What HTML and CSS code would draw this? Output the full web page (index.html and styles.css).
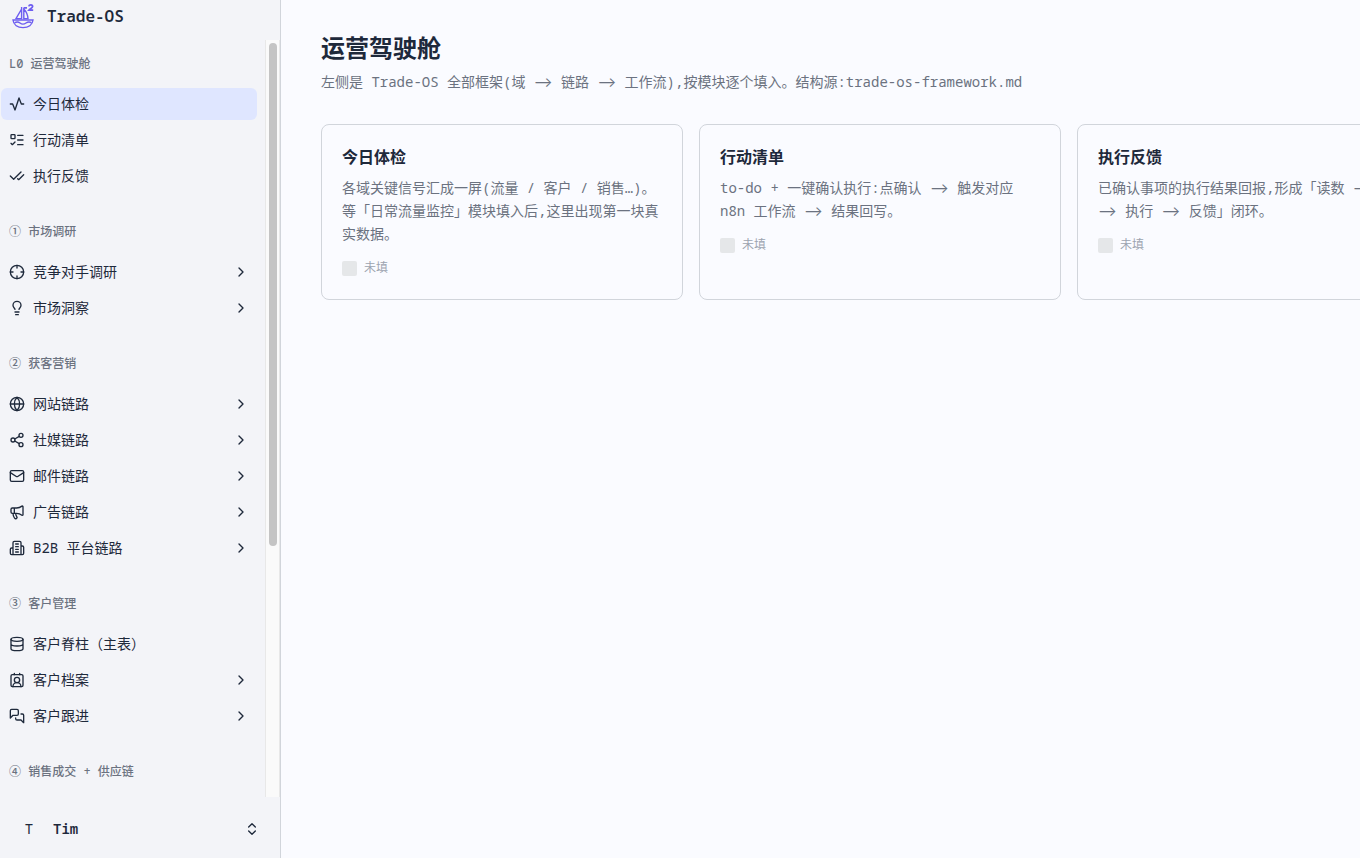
FILE: index.html
```
<!DOCTYPE html>
<html lang="zh-CN">

<head>
    <meta charset="UTF-8">
    <title>Trade-OS</title>
    <link rel="stylesheet" href="styles.css">
</head>

<body>

    <aside class="sidebar">
        <a href="#" class="brand">
            <svg class="logo" viewBox="0 0 24 24">
                <path d="M10.600 3v12.600M10.600 5 5 14.600h5.600M12.800 3.500v12M12.800 5c2.600 2.800 4 6 4.200 9.600h-4.200" />
                <path d="M2 16h20c-.5 4.800-4.600 7.600-10 7.600S2.500 20.800 2 16z" />
                <path d="M3.500 19c2-1.400 3.800-1.300 5.500 0s4 1.400 6 0 3.800-1.300 5.500-.2" />
                <path class="thick" d="M13 3.800h3M17.800 2.400c.4-2 3.800-2 3.800.1 0 1.400-2.400 2-3.700 3.700h4.300" />
            </svg>
            <span>Trade-OS</span>
        </a>

        <div class="scroll-area">
            <nav class="nav">
                <section class="group">
                    <h2 class="group-label">L0 运营驾驶舱</h2>
                    <a href="#" class="item active">
                        <svg class="icon" viewBox="0 0 24 24"><path d="M2 12h3.500L9 21 15 3l3.500 9H22" /></svg>
                        <span>今日体检</span>
                    </a>
                    <a href="#" class="item">
                        <svg class="icon" viewBox="0 0 24 24"><path d="M13 5h8M13 12h8M13 19h8M3 17l2 2 4-4" /><rect x="3" y="4" width="6" height="6" rx="1" /></svg>
                        <span>行动清单</span>
                    </a>
                    <a href="#" class="item">
                        <svg class="icon" viewBox="0 0 24 24"><path d="M18 6 7 17l-5-5M22 10l-7.500 7.500L13 16" /></svg>
                        <span>执行反馈</span>
                    </a>
                </section>

                <section class="group">
                    <h2 class="group-label">① 市场调研</h2>
                    <button type="button" class="item">
                        <svg class="icon" viewBox="0 0 24 24"><circle cx="12" cy="12" r="10" /><path d="M22 12h-4M6 12H2M12 6V2M12 22v-4" /></svg>
                        <span>竞争对手调研</span>
                        <svg class="icon chevron" viewBox="0 0 24 24"><path d="M9 18l6-6-6-6" /></svg>
                    </button>
                    <button type="button" class="item">
                        <svg class="icon" viewBox="0 0 24 24"><path d="M15 14c.2-1 .7-1.700 1.500-2.500 1-.9 1.500-2.200 1.500-3.500A6 6 0 0 0 6 8c0 1 .2 2.200 1.500 3.500.7.7 1.300 1.500 1.500 2.500M9 18h6M10 22h4" /></svg>
                        <span>市场洞察</span>
                        <svg class="icon chevron" viewBox="0 0 24 24"><path d="M9 18l6-6-6-6" /></svg>
                    </button>
                </section>

                <section class="group">
                    <h2 class="group-label">② 获客营销</h2>
                    <button type="button" class="item">
                        <svg class="icon" viewBox="0 0 24 24"><circle cx="12" cy="12" r="10" /><path d="M12 2a14.500 14.500 0 0 0 0 20 14.500 14.500 0 0 0 0-20M2 12h20" /></svg>
                        <span>网站链路</span>
                        <svg class="icon chevron" viewBox="0 0 24 24"><path d="M9 18l6-6-6-6" /></svg>
                    </button>
                    <button type="button" class="item">
                        <svg class="icon" viewBox="0 0 24 24"><circle cx="18" cy="5" r="3" /><circle cx="6" cy="12" r="3" /><circle cx="18" cy="19" r="3" /><path d="M8.590 13.510l6.830 3.980M15.410 6.510l-6.820 3.980" /></svg>
                        <span>社媒链路</span>
                        <svg class="icon chevron" viewBox="0 0 24 24"><path d="M9 18l6-6-6-6" /></svg>
                    </button>
                    <button type="button" class="item">
                        <svg class="icon" viewBox="0 0 24 24"><rect x="2" y="4" width="20" height="16" rx="2" /><path d="M22 7l-8.970 5.700a1.940 1.940 0 0 1-2.060 0L2 7" /></svg>
                        <span>邮件链路</span>
                        <svg class="icon chevron" viewBox="0 0 24 24"><path d="M9 18l6-6-6-6" /></svg>
                    </button>
                    <button type="button" class="item">
                        <svg class="icon" viewBox="0 0 24 24"><path d="M11 6a13 13 0 0 0 8.400-2.800A1 1 0 0 1 21 4v12a1 1 0 0 1-1.600.8A13 13 0 0 0 11 14H5a2 2 0 0 1-2-2V8a2 2 0 0 1 2-2zM6 14a12 12 0 0 0 2.400 7.200 2 2 0 0 0 3.200-2.400A8 8 0 0 1 10 14M8 6v8" /></svg>
                        <span>广告链路</span>
                        <svg class="icon chevron" viewBox="0 0 24 24"><path d="M9 18l6-6-6-6" /></svg>
                    </button>
                    <button type="button" class="item">
                        <svg class="icon" viewBox="0 0 24 24"><path d="M6 22V4a2 2 0 0 1 2-2h8a2 2 0 0 1 2 2v18zM6 12H4a2 2 0 0 0-2 2v6a2 2 0 0 0 2 2h2M18 9h2a2 2 0 0 1 2 2v9a2 2 0 0 1-2 2h-2M10 6h4M10 10h4M10 14h4M10 18h4" /></svg>
                        <span>B2B 平台链路</span>
                        <svg class="icon chevron" viewBox="0 0 24 24"><path d="M9 18l6-6-6-6" /></svg>
                    </button>
                </section>

                <section class="group">
                    <h2 class="group-label">③ 客户管理</h2>
                    <a href="#" class="item">
                        <svg class="icon" viewBox="0 0 24 24"><ellipse cx="12" cy="5" rx="9" ry="3" /><path d="M3 5v14a9 3 0 0 0 18 0V5M3 12a9 3 0 0 0 18 0" /></svg>
                        <span>客户脊柱（主表）</span>
                    </a>
                    <button type="button" class="item">
                        <svg class="icon" viewBox="0 0 24 24"><path d="M16 2v2M8 2v2M17.915 22a6 6 0 0 0-12 0" /><circle cx="12" cy="12" r="4" /><rect x="3" y="4" width="18" height="18" rx="2" /></svg>
                        <span>客户档案</span>
                        <svg class="icon chevron" viewBox="0 0 24 24"><path d="M9 18l6-6-6-6" /></svg>
                    </button>
                    <button type="button" class="item">
                        <svg class="icon" viewBox="0 0 24 24"><path d="M14 9a2 2 0 0 1-2 2H6l-4 4V4a2 2 0 0 1 2-2h8a2 2 0 0 1 2 2zM18 9h2a2 2 0 0 1 2 2v11l-4-4h-6a2 2 0 0 1-2-2v-1" /></svg>
                        <span>客户跟进</span>
                        <svg class="icon chevron" viewBox="0 0 24 24"><path d="M9 18l6-6-6-6" /></svg>
                    </button>
                </section>

                <section class="group">
                    <h2 class="group-label">④ 销售成交 + 供应链</h2>
                </section>
            </nav>
            <div class="track">
                <div class="thumb"></div>
            </div>
        </div>

        <button type="button" class="user">
            <span class="avatar">T</span>
            <span class="user-name">Tim</span>
            <svg class="icon" viewBox="0 0 24 24"><path d="M7 15l5 5 5-5M7 9l5-5 5 5" /></svg>
        </button>
    </aside>

    <main class="main">
        <h1>运营驾驶舱</h1>
        <p class="intro">左侧是 Trade-OS 全部框架(域 <span class="arrow">⟶</span> 链路 <span class="arrow">⟶</span> 工作流),按模块逐个填入。结构源:trade-os-framework.md</p>

        <div class="cards">
            <article class="card">
                <h3>今日体检</h3>
                <p>各域关键信号汇成一屏(流量 / 客户 / 销售…)。等「日常流量监控」模块填入后,这里出现第一块真实数据。</p>
                <div class="status"><span class="box"></span>未填</div>
            </article>
            <article class="card">
                <h3>行动清单</h3>
                <p>to-do + 一键确认执行:点确认 <span class="arrow">⟶</span> 触发对应 n8n 工作流 <span class="arrow">⟶</span> 结果回写。</p>
                <div class="status"><span class="box"></span>未填</div>
            </article>
            <article class="card">
                <h3>执行反馈</h3>
                <p>已确认事项的执行结果回报,形成「读数 <span class="arrow">⟶</span> 判断 <span class="arrow">⟶</span> 执行 <span class="arrow">⟶</span> 反馈」闭环。</p>
                <div class="status"><span class="box"></span>未填</div>
            </article>
        </div>
    </main>

</body>

</html>
```
FILE: styles.css
```
* {
    box-sizing: border-box;
}

body {
    display: flex;
    height: 100vh;
    margin: 0;
    overflow: hidden;
    font-family: "Noto Sans Mono", "Noto Sans CJK SC", monospace;
    font-size: 14px;
    line-height: 20px;
    color: #1e293b;
    background: #fafbff;
}

h1,
h2,
h3,
p {
    margin: 0;
}

a {
    color: inherit;
    text-decoration: none;
}

button {
    border: 0;
    background: none;
    font: inherit;
    color: inherit;
    text-align: left;
}

/* Sidebar */
.sidebar {
    display: flex;
    flex-direction: column;
    flex: none;
    width: 281px;
    border-right: 1px solid #d1d5db;
    background: #f3f4f8;
}

.brand {
    display: flex;
    align-items: center;
    gap: 12px;
    height: 32px;
    margin-bottom: 8px;
    padding-left: 11px;
    font-size: 16px;
    font-weight: 600;
}

.logo {
    width: 24px;
    height: 24px;
    overflow: visible;
    fill: none;
    stroke: #6d5df0;
    stroke-width: 1.4;
}

.logo .thick {
    stroke-width: 1.8;
}

.scroll-area {
    display: flex;
    flex: 1;
    min-height: 0;
}

.nav {
    display: flex;
    flex-direction: column;
    flex: 1;
    gap: 24px;
    padding: 8px 8px 0 1px;
    overflow: hidden;
}

.group {
    display: flex;
    flex-direction: column;
    gap: 4px;
}

.group-label {
    height: 32px;
    margin-bottom: 4px;
    padding-left: 8px;
    font-size: 12px;
    font-weight: 500;
    line-height: 32px;
    color: #6b7280;
}

.item {
    display: flex;
    align-items: center;
    gap: 8px;
    height: 32px;
    padding: 0 8px;
    border-radius: 6px;
}

.item.active {
    background: #dfe6ff;
}

.icon {
    flex: none;
    width: 16px;
    height: 16px;
    fill: none;
    stroke: currentColor;
    stroke-width: 2;
    stroke-linecap: round;
    stroke-linejoin: round;
}

.chevron {
    margin-left: auto;
}

.track {
    width: 15px;
    padding: 3px;
    border: solid #e8e8e8;
    border-width: 0 1px;
    background: #fafafa;
}

.thumb {
    width: 8px;
    height: 67%;
    border-radius: 4px;
    background: #c4c4c4;
}

.user {
    display: flex;
    align-items: center;
    height: 61px;
    padding: 3px 20px 0 13px;
}

.avatar {
    width: 32px;
    margin-right: 8px;
    text-align: center;
}

.user-name {
    flex: 1;
    font-weight: 600;
}

/* Main */
.main {
    flex: 1;
    min-width: 0;
    padding: 32px 40px;
    overflow: hidden;
}

h1 {
    font-size: 24px;
    font-weight: 700;
    line-height: 32px;
}

.intro {
    margin: 8px 0 32px;
    color: #6b7280;
}

.arrow {
    font-family: Inter, sans-serif;
}

.cards {
    display: grid;
    grid-template-columns: repeat(3, minmax(362px, 1fr));
    gap: 16px;
}

.card {
    padding: 20px;
    border: 1px solid #d1d5db;
    border-radius: 8px;
}

.card h3 {
    margin-bottom: 7px;
    font-size: 16px;
    font-weight: 600;
    line-height: 24px;
}

.card p {
    line-height: 23px;
    color: #6b7280;
}

.status {
    display: flex;
    align-items: center;
    gap: 7px;
    height: 22px;
    margin-top: 12px;
    font-size: 12px;
    line-height: 22px;
    color: #9ca3af;
}

.box {
    width: 15px;
    height: 15px;
    border-radius: 2px;
    background: #e5e7e9;
}
```
